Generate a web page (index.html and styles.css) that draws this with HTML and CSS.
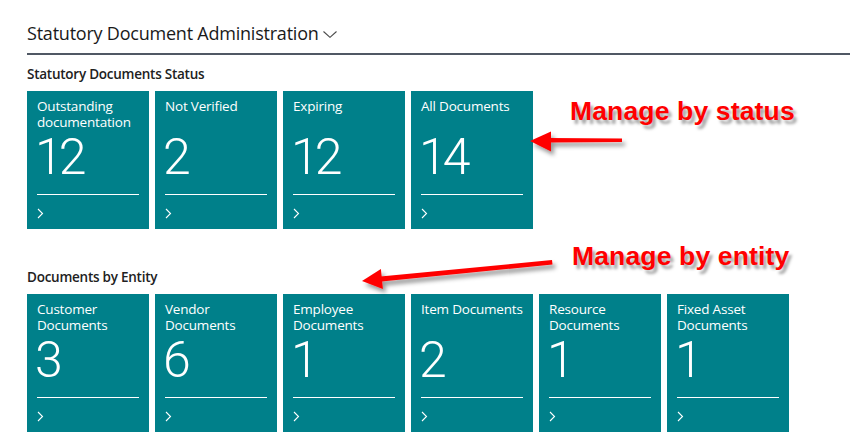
FILE: index.html
```html
<!DOCTYPE html>
<html>
<head>
<meta charset="utf-8">
<link rel="stylesheet" href="styles.css">
</head>
<body>
<div class="page">
  <header class="header">
    <h1 class="title">Statutory Document Administration</h1>
    <svg class="title-chev" width="14" height="7" viewBox="0 0 14 7"><polyline points="0.5,0.5 7,6.3 13.5,0.5" fill="none" stroke="#4a4a4a" stroke-width="1.1"/></svg>
  </header>

  <section class="section first">
    <h2 class="section-title">Statutory Documents Status</h2>
    <div class="tiles">
      <div class="tile"><div class="tile-title">Outstanding documentation</div><div class="tile-num">12</div><div class="tile-foot"><svg width="7" height="11" viewBox="0 0 7 11"><polyline points="1,1 5.5,5.5 1,10" fill="none" stroke="#fff" stroke-width="1.1"/></svg></div></div>
      <div class="tile"><div class="tile-title">Not Verified</div><div class="tile-num">2</div><div class="tile-foot"><svg width="7" height="11" viewBox="0 0 7 11"><polyline points="1,1 5.5,5.5 1,10" fill="none" stroke="#fff" stroke-width="1.1"/></svg></div></div>
      <div class="tile"><div class="tile-title">Expiring</div><div class="tile-num">12</div><div class="tile-foot"><svg width="7" height="11" viewBox="0 0 7 11"><polyline points="1,1 5.5,5.5 1,10" fill="none" stroke="#fff" stroke-width="1.1"/></svg></div></div>
      <div class="tile"><div class="tile-title">All Documents</div><div class="tile-num">14</div><div class="tile-foot"><svg width="7" height="11" viewBox="0 0 7 11"><polyline points="1,1 5.5,5.5 1,10" fill="none" stroke="#fff" stroke-width="1.1"/></svg></div></div>
    </div>
  </section>

  <section class="section second">
    <h2 class="section-title">Documents by Entity</h2>
    <div class="tiles">
      <div class="tile"><div class="tile-title">Customer Documents</div><div class="tile-num">3</div><div class="tile-foot"><svg width="7" height="11" viewBox="0 0 7 11"><polyline points="1,1 5.5,5.5 1,10" fill="none" stroke="#fff" stroke-width="1.1"/></svg></div></div>
      <div class="tile"><div class="tile-title">Vendor Documents</div><div class="tile-num">6</div><div class="tile-foot"><svg width="7" height="11" viewBox="0 0 7 11"><polyline points="1,1 5.5,5.5 1,10" fill="none" stroke="#fff" stroke-width="1.1"/></svg></div></div>
      <div class="tile"><div class="tile-title">Employee Documents</div><div class="tile-num">1</div><div class="tile-foot"><svg width="7" height="11" viewBox="0 0 7 11"><polyline points="1,1 5.5,5.5 1,10" fill="none" stroke="#fff" stroke-width="1.1"/></svg></div></div>
      <div class="tile"><div class="tile-title">Item Documents</div><div class="tile-num">2</div><div class="tile-foot"><svg width="7" height="11" viewBox="0 0 7 11"><polyline points="1,1 5.5,5.5 1,10" fill="none" stroke="#fff" stroke-width="1.1"/></svg></div></div>
      <div class="tile"><div class="tile-title">Resource Documents</div><div class="tile-num">1</div><div class="tile-foot"><svg width="7" height="11" viewBox="0 0 7 11"><polyline points="1,1 5.5,5.5 1,10" fill="none" stroke="#fff" stroke-width="1.1"/></svg></div></div>
      <div class="tile"><div class="tile-title">Fixed Asset Documents</div><div class="tile-num">1</div><div class="tile-foot"><svg width="7" height="11" viewBox="0 0 7 11"><polyline points="1,1 5.5,5.5 1,10" fill="none" stroke="#fff" stroke-width="1.1"/></svg></div></div>
    </div>
  </section>
</div>

<div class="note note-status">Manage by status</div>
<div class="note note-entity">Manage by entity</div>
<svg class="arrows" width="850" height="448" viewBox="0 0 850 448">
  <defs>
    <filter id="sh" x="-20%" y="-50%" width="140%" height="200%">
      <feDropShadow dx="3" dy="4" stdDeviation="2" flood-color="#000" flood-opacity="0.4"/>
    </filter>
  </defs>
  <g filter="url(#sh)" fill="#ff0000">
    <path d="M548,138 L622,138.5 L622,142 L548,142.5 Z"/>
    <polygon points="530,141 551,131.5 551,151.5"/>
    <path d="M380.5,276.5 L552,260 L552.5,264.5 L381.5,281.5 Z"/>
    <polygon points="362,281 380.9,269 382.9,289"/>
  </g>
</svg>
</body>
</html>
```
FILE: styles.css
```css
html, body {
  margin: 0;
  padding: 0;
  background: #fff;
}
body {
  width: 850px;
  height: 448px;
  overflow: hidden;
  position: relative;
  font-family: "Open Sans", "Noto Sans", sans-serif;
  color: #212121;
}
.page {
  padding: 21px 0 0 27px;
}
.header {
  display: flex;
  align-items: center;
  border-bottom: 2px solid #505864;
  padding-bottom: 8px;
}
.title {
  margin: 0;
  font-size: 18px;
  line-height: 24px;
  font-weight: 400;
  letter-spacing: -0.22px;
  color: #1a1a1a;
}
.title-chev {
  margin-left: 4px;
  margin-top: 2px;
}
.section.first {
  margin-top: 10px;
}
.section.second {
  margin-top: 39px;
}
.section-title {
  margin: 0 0 8px;
  font-size: 13.5px;
  line-height: 18px;
  font-weight: 600;
  letter-spacing: -0.25px;
  color: #212121;
}
.tiles {
  display: flex;
  gap: 6px;
}
.tile {
  width: 122px;
  height: 138px;
  box-sizing: border-box;
  background: #00808a;
  color: #fff;
  padding: 7px 10px 0;
  display: flex;
  flex-direction: column;
}
.tile-title {
  font-size: 13.5px;
  line-height: 16px;
  height: 32px;
  letter-spacing: -0.2px;
}
.tile-num {
  font-family: Roboto, "Open Sans", sans-serif;
  font-size: 50px;
  line-height: 50px;
  height: 50px;
  margin-top: 2px;
  font-weight: 300;
  letter-spacing: -4px;
  text-indent: -2px;
  padding-bottom: 12px;
  border-bottom: 1px solid #fff;
}
.tile-foot {
  padding-top: 13px;
  height: 11px;
}
.tile-foot svg {
  display: block;
}
.note {
  position: absolute;
  font-family: "Liberation Sans", Arial, sans-serif;
  font-weight: 700;
  font-size: 26.5px;
  line-height: 26px;
  letter-spacing: 0.15px;
  color: #ff0000;
  text-shadow: 3px 4px 3px rgba(0, 0, 0, 0.35);
  white-space: nowrap;
}
.note-status {
  left: 570px;
  top: 98px;
}
.note-entity {
  left: 572px;
  top: 243px;
}
.arrows {
  position: absolute;
  left: 0;
  top: 0;
  pointer-events: none;
}
```
